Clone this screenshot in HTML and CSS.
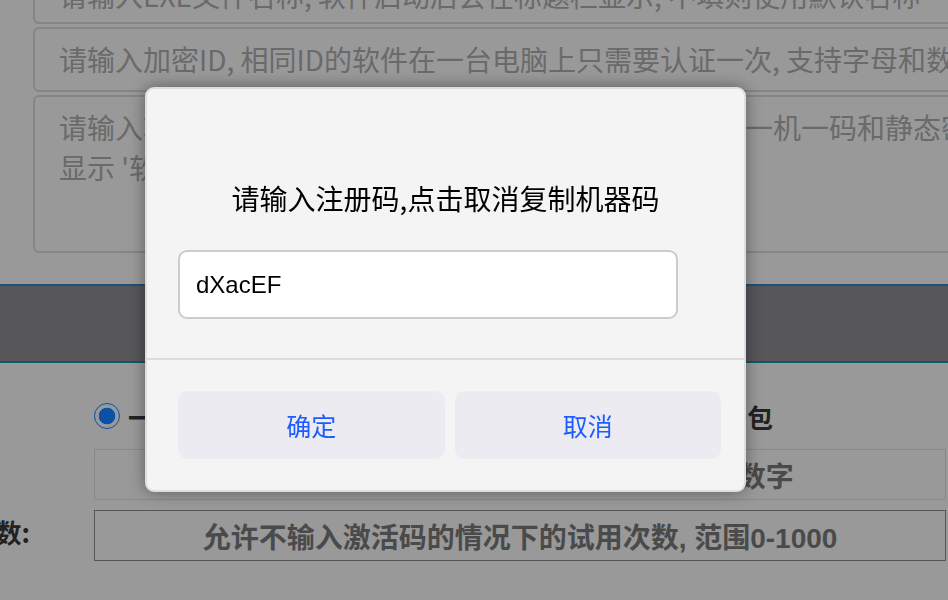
FILE: index.html
```html
<!DOCTYPE html>
<html>
<head>
    <meta charset="utf-8">
    <title>软件加密</title>
    <link rel="stylesheet" href="styles.css">
</head>
<body>
    <div class="page">
        <div class="fields">
            <textarea class="field field-top" placeholder="请输入EXE文件名称, 软件启动后会在标题栏显示, 不填则使用默认名称"></textarea>
            <textarea class="field field-id" placeholder="请输入加密ID, 相同ID的软件在一台电脑上只需要认证一次, 支持字母和数字"></textarea>
            <textarea class="field field-tip" placeholder="请输入软件到期后的提示语, 到期提示语只对选择使用了一机一码和静态密码的软件&#10;显示 '软件已到期, 请联系作者'"></textarea>
        </div>

        <div class="band"></div>

        <div class="options">
            <div class="radio-row">
                <label class="radio-item"><span class="radio checked"></span>一机一码加密</label>
                <label class="radio-item"><span class="radio"></span>静态密码加密包</label>
            </div>
            <div class="form-row form-row-first">
                <div class="row-label"></div>
                <div class="box box-light">请输入软件的版本名称, 支持中文字母和数字</div>
            </div>
            <div class="form-row">
                <div class="row-label"><span>试用次数:</span></div>
                <div class="box box-dark">允许不输入激活码的情况下的试用次数, 范围0-1000</div>
            </div>
        </div>
    </div>

    <div class="mask">
        <div class="dialog">
            <div class="dialog-body">
                <div class="dialog-title">请输入注册码,点击取消复制机器码</div>
                <input class="dialog-input" type="text" value="dXacEF">
            </div>
            <div class="dialog-actions">
                <button class="dialog-btn">确定</button>
                <button class="dialog-btn">取消</button>
            </div>
        </div>
    </div>
</body>
</html>
```

FILE: styles.css
```css
html, body {
    margin: 0;
    height: 100%;
    overflow: hidden;
}
body {
    background-color: #999999;
    font-family: "Noto Sans CJK SC", "Liberation Sans", sans-serif;
}

/* page behind the dialog (already dimmed) */
.page {
    width: 948px;
}
.fields {
    display: flex;
    flex-direction: column;
    gap: 3px;
    margin-top: -37px;
    padding-left: 33px;
}
.field {
    display: block;
    box-sizing: border-box;
    width: 960px;
    margin: 0;
    padding: 10px 24px;
    border: 2px solid #858585;
    border-radius: 6px;
    background-color: #999999;
    font-family: "Noto Sans CJK SC", sans-serif;
    font-size: 28px;
    line-height: 40px;
    white-space: pre;
    overflow: hidden;
    resize: none;
    outline: none;
}
.field::placeholder {
    color: #6a6a6a;
}
.field-top {
    height: 61px;
}
.field-id {
    height: 65px;
}
.field-tip {
    height: 158px;
}
.band {
    height: 75px;
    margin-top: 31px;
    background-color: #56565b;
    border-top: 2px solid #1f4e79;
    border-bottom: 2px solid #0b5a66;
}
.options {
    padding-top: 37px;
}
.radio-row {
    display: flex;
    justify-content: space-between;
    width: 679px;
    margin-left: 94px;
    height: 32px;
    align-items: center;
}
.radio-item {
    display: flex;
    align-items: center;
    gap: 8px;
    font-size: 26px;
    font-weight: bold;
    color: #222222;
}
.radio {
    box-sizing: border-box;
    width: 26px;
    height: 26px;
    border: 2px solid #777777;
    border-radius: 50%;
}
.radio.checked {
    border: 1.5px solid #0b52a6;
    background: radial-gradient(circle, #0b52a6 0 8px, transparent 8.6px);
}
.form-row {
    display: flex;
    align-items: center;
    margin-top: 10px;
}
.form-row-first {
    margin-top: 17px;
}
.row-label {
    display: flex;
    justify-content: flex-end;
    width: 30px;
    margin-right: 64px;
    margin-bottom: 8px;
    white-space: nowrap;
    font-size: 26px;
    font-weight: bold;
    color: #222222;
}
.box {
    box-sizing: border-box;
    width: 852px;
    height: 51px;
    display: flex;
    align-items: center;
    justify-content: center;
    font-family: "Liberation Sans", "Noto Sans CJK SC", sans-serif;
    font-size: 28px;
    font-weight: bold;
    color: #4a4a4a;
}
.box-light {
    border: 1px solid #888888;
}
.box-dark {
    border: 1px solid #555555;
}

/* dialog layer */
.mask {
    position: fixed;
    top: 0;
    left: 0;
    right: 0;
    bottom: 0;
    padding: 87px 0 0 145px;
}
.dialog {
    box-sizing: border-box;
    width: 601px;
    height: 405px;
    display: flex;
    flex-direction: column;
    background-color: #f4f4f4;
    border: 2px solid #dedede;
    border-radius: 9px;
    box-shadow: 0 0 16px rgba(0, 0, 0, 0.4);
}
.dialog-body {
    display: flex;
    flex-direction: column;
    padding: 89px 0 39px 31px;
    border-bottom: 2px solid #dcdcdc;
}
.dialog-title {
    height: 40px;
    line-height: 40px;
    padding-right: 31px;
    text-align: center;
    font-size: 28px;
    color: #000000;
}
.dialog-input {
    box-sizing: border-box;
    width: 500px;
    height: 69px;
    margin-top: 32px;
    padding: 0 16px;
    border: 2px solid #cccccc;
    border-radius: 9px;
    background-color: #ffffff;
    font-family: "Liberation Sans", sans-serif;
    font-size: 24px;
    color: #000000;
    outline: none;
}
.dialog-actions {
    display: flex;
    gap: 10px;
    padding: 31px 23px 0 31px;
}
.dialog-btn {
    flex: 1;
    height: 68px;
    border: none;
    border-radius: 10px;
    background-color: #ebebf1;
    font-family: "Noto Sans CJK SC", sans-serif;
    font-size: 25px;
    color: #1d5cff;
}
```
